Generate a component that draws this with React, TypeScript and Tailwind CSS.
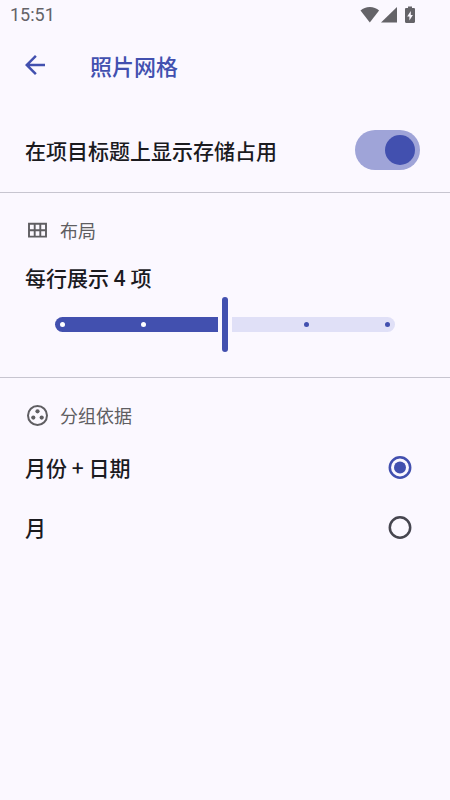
import { useState } from "react";
import type { ReactNode } from "react";

const labelText = "text-[21px] leading-[30px] font-medium text-[#1b1b1f]";

function StatusBar() {
  return (
    <div className="flex h-[30px] items-center justify-between pr-[35px] pl-[10px] text-[#646368]">
      <span className="font-[Roboto,sans-serif] text-[18px] leading-5 font-normal">15:51</span>
      <svg width="55" height="18" viewBox="0 0 55 18" fill="currentColor" aria-hidden="true">
        <path d="M0.5 4.6C3 2.3 6.2 1 9.8 1s6.800 1.300 9.300 3.600L9.800 16.500Z" />
        <path d="M37 1v15.500H21Z" />
        <path
          fillRule="evenodd"
          d="M48 0.500h4v1.500h1.800c.7 0 1.200.5 1.200 1.200v12.600c0 .7-.5 1.200-1.200 1.200h-7.600c-.7 0-1.200-.5-1.200-1.200V3.200c0-.7.5-1.200 1.200-1.200H48ZM50.800 5l-3.600 5.600h2.200v4l3.500-5.700h-2.100Z"
        />
      </svg>
    </div>
  );
}

function SectionTitle({ icon, children }: { icon: ReactNode; children: ReactNode }) {
  return (
    <h2 className="flex items-center gap-[10px] pl-[25px] text-[18px] leading-[26px] font-normal text-[#5f5e62]">
      {icon}
      {children}
    </h2>
  );
}

function GridIcon() {
  return (
    <svg width="25" height="25" viewBox="0 0 25 25" fill="none" stroke="currentColor" strokeWidth="1.900" aria-hidden="true">
      <path d="M4 5.800h17v12.800H4ZM4 12.200h17M9.700 5.800v12.800M15.300 5.800v12.800" />
    </svg>
  );
}

function GroupIcon() {
  return (
    <svg width="25" height="25" viewBox="0 0 25 25" fill="currentColor" aria-hidden="true">
      <circle cx="12.500" cy="12.500" r="9.500" fill="none" stroke="currentColor" strokeWidth="2" />
      <circle cx="12.500" cy="8.300" r="2.100" />
      <circle cx="8.300" cy="14.600" r="2.100" />
      <circle cx="16.700" cy="14.600" r="2.100" />
    </svg>
  );
}

function ColumnSlider({ value, onChange }: { value: number; onChange: (value: number) => void }) {
  const steps = [2, 3, 4, 5, 6];
  const before = steps.filter((step) => step < value);
  const after = steps.filter((step) => step > value);
  return (
    <div className="relative mx-[55px] flex h-[55px] items-center gap-1">
      <div
        className="flex h-[15px] items-center rounded-l-full rounded-r-[3px] bg-[#4250af] pl-[5px]"
        style={{ flexGrow: before.length, flexBasis: 0 }}
      >
        <div className="-mr-1 flex flex-1">
          {before.map((step) => (
            <span key={step} className="flex-1">
              <span className="block size-[5px] rounded-full bg-white" />
            </span>
          ))}
        </div>
      </div>
      <div className="h-[55px] w-[6px] rounded-full bg-[#4250af]" />
      <div
        className="flex h-[15px] items-center rounded-l-[3px] rounded-r-full bg-[#e0e0f7] pr-[5px]"
        style={{ flexGrow: after.length, flexBasis: 0 }}
      >
        <div className="-ml-1 flex flex-1">
          {after.map((step) => (
            <span key={step} className="flex flex-1 justify-end">
              <span className="block size-[5px] rounded-full bg-[#4250af]" />
            </span>
          ))}
        </div>
      </div>
      <input
        id="columns"
        type="range"
        min={2}
        max={6}
        value={value}
        onChange={(event) => onChange(Number(event.target.value))}
        className="absolute inset-0 h-full w-full cursor-pointer opacity-0"
      />
    </div>
  );
}

function RadioRow({ label, checked, onSelect }: { label: string; checked: boolean; onSelect: () => void }) {
  return (
    <label className="flex h-[60px] items-center justify-between pr-[35px] pl-[25px]">
      <span className={`pb-[2px] ${labelText}`}>{label}</span>
      <span className={`relative size-[30px] ${checked ? "text-[#4250af]" : "text-[#46464f]"}`}>
        <svg width="30" height="30" viewBox="0 0 30 30" fill="currentColor" aria-hidden="true">
          <circle cx="15" cy="14.500" r="10.200" fill="none" stroke="currentColor" strokeWidth="2.500" />
          {checked && <circle cx="15" cy="14.500" r="6" />}
        </svg>
        <input
          type="radio"
          name="grouping"
          checked={checked}
          onChange={onSelect}
          className="absolute inset-0 size-full opacity-0"
        />
      </span>
    </label>
  );
}

export default function App() {
  const [showUsage, setShowUsage] = useState(true);
  const [columns, setColumns] = useState(4);
  const [grouping, setGrouping] = useState("月份 + 日期");

  return (
    <div lang="zh-CN" className="min-h-screen bg-[#fbf8ff] font-['Noto_Sans_CJK_SC',sans-serif]">
      <StatusBar />
      <header className="flex h-[70px] items-center gap-10 pl-5 text-[#4250af]">
        <button type="button" aria-label="返回" className="size-[30px]">
          <svg width="30" height="30" viewBox="0 0 24 24" fill="currentColor" aria-hidden="true">
            <path d="M20 11H7.830l5.590-5.590L12 4l-8 8 8 8 1.410-1.410L7.830 13H20v-2z" />
          </svg>
        </button>
        <h1 className="text-[22px] leading-[30px] font-medium">照片网格</h1>
      </header>

      <main>
        <section className="border-b border-[#c7c5d0] pt-[30px] pb-[22px]">
          <label className="flex items-center justify-between pr-[30px] pl-[25px]">
            <span className={labelText}>在项目标题上显示存储占用</span>
            <input
              type="checkbox"
              role="switch"
              checked={showUsage}
              onChange={(event) => setShowUsage(event.target.checked)}
              className="flex h-10 w-[65px] shrink-0 appearance-none items-center rounded-full bg-[#e0e0f7] px-[5px] before:size-[30px] before:rounded-full before:bg-[#77767f] checked:justify-end checked:bg-[#9fa4d8] checked:before:bg-[#4250af]"
            />
          </label>
        </section>

        <section className="border-b border-[#c7c5d0] pt-6 pb-[25px]">
          <SectionTitle icon={<GridIcon />}>布局</SectionTitle>
          <label htmlFor="columns" className={`mt-[19px] mb-[5px] block pl-[25px] ${labelText}`}>
            每行展示 {columns} 项
          </label>
          <ColumnSlider value={columns} onChange={setColumns} />
        </section>

        <section className="pt-6">
          <SectionTitle icon={<GroupIcon />}>分组依据</SectionTitle>
          <div role="radiogroup" aria-label="分组依据" className="mt-[10px]">
            {["月份 + 日期", "月"].map((option) => (
              <RadioRow
                key={option}
                label={option}
                checked={grouping === option}
                onSelect={() => setGrouping(option)}
              />
            ))}
          </div>
        </section>
      </main>
    </div>
  );
}
